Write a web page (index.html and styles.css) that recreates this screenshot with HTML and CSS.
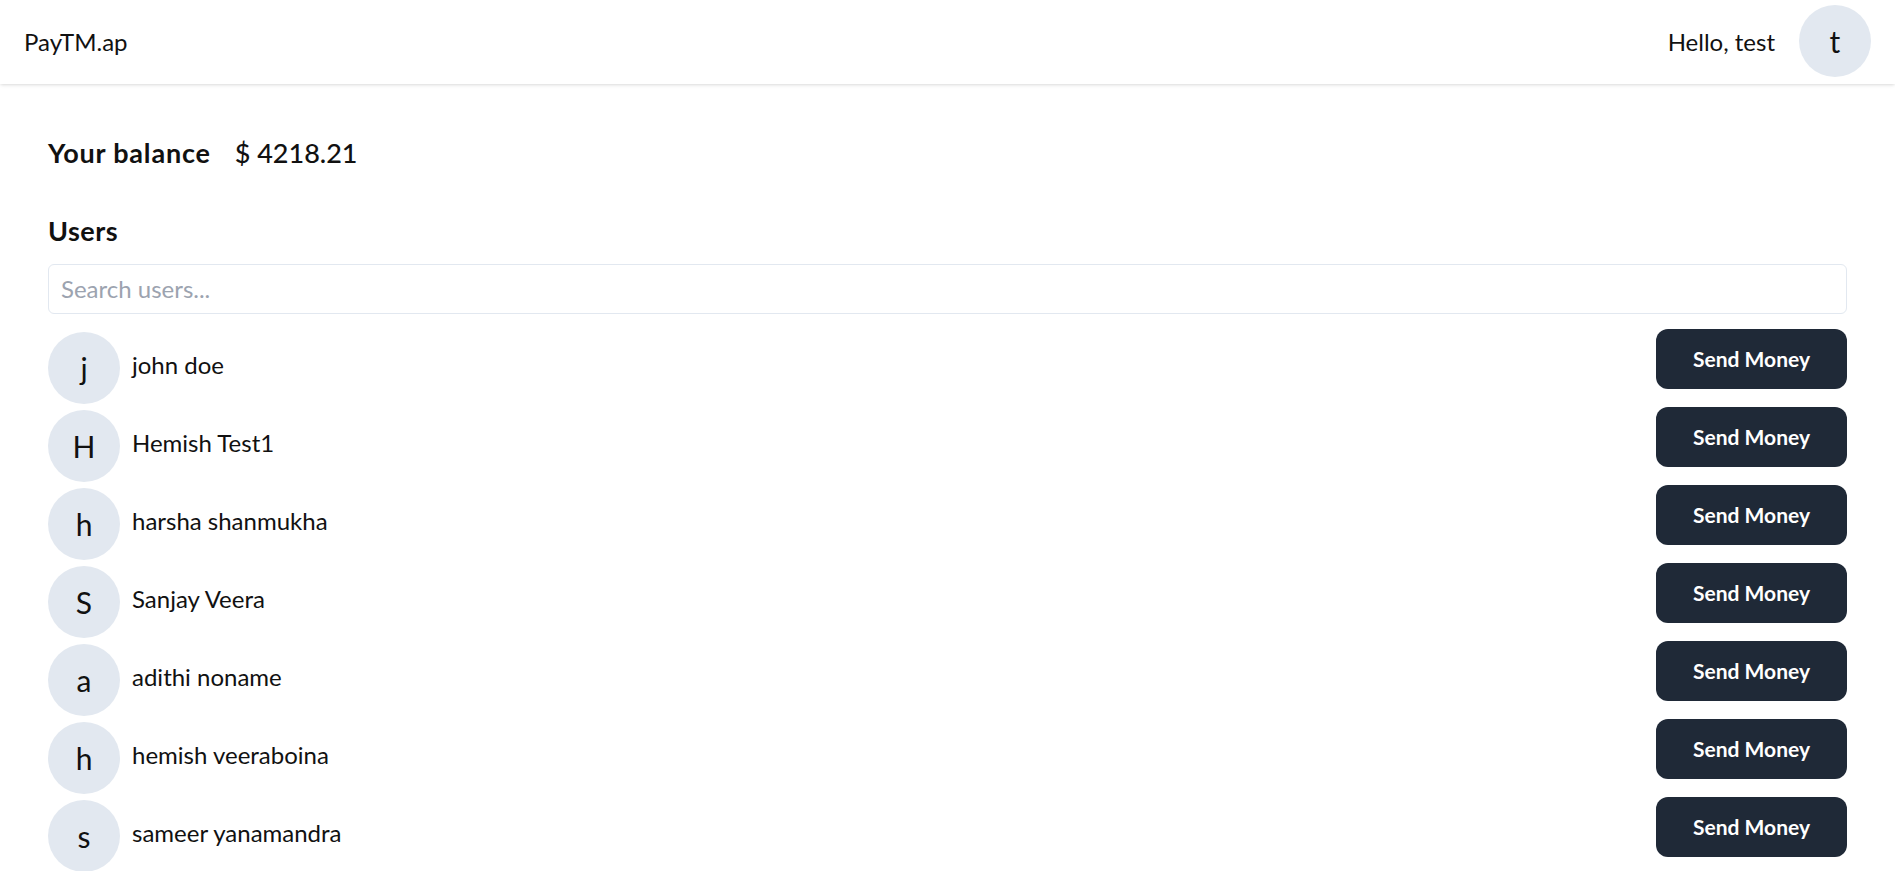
FILE: index.html
```html
<!DOCTYPE html>
<html lang="en">
<head>
  <meta charset="UTF-8" />
  <meta name="viewport" content="width=device-width,initial-scale=1.0" />
  <title>PayTM.ap</title>
  <link rel="stylesheet" href="styles.css">
</head>
<body>
  <header class="appbar">
    <div class="appbar-brand">PayTM.ap</div>
    <div class="appbar-user">
      <div class="appbar-hello">Hello, test</div>
      <div class="avatar avatar-header">t</div>
    </div>
  </header>

  <main class="dashboard">
    <div class="balance">
      <div class="balance-label">Your balance</div>
      <div class="balance-value">$ 4218.21</div>
    </div>

    <div class="users-title">Users</div>
    <div class="search">
      <input type="text" class="search-input" placeholder="Search users..." />
    </div>

    <div class="user-list">
      <div class="user-row">
        <div class="user-info">
          <div class="avatar">j</div>
          <div class="user-name">john doe</div>
        </div>
        <div class="user-action"><button class="btn">Send Money</button></div>
      </div>
      <div class="user-row">
        <div class="user-info">
          <div class="avatar">H</div>
          <div class="user-name">Hemish Test1</div>
        </div>
        <div class="user-action"><button class="btn">Send Money</button></div>
      </div>
      <div class="user-row">
        <div class="user-info">
          <div class="avatar">h</div>
          <div class="user-name">harsha shanmukha</div>
        </div>
        <div class="user-action"><button class="btn">Send Money</button></div>
      </div>
      <div class="user-row">
        <div class="user-info">
          <div class="avatar">S</div>
          <div class="user-name">Sanjay Veera</div>
        </div>
        <div class="user-action"><button class="btn">Send Money</button></div>
      </div>
      <div class="user-row">
        <div class="user-info">
          <div class="avatar">a</div>
          <div class="user-name">adithi noname</div>
        </div>
        <div class="user-action"><button class="btn">Send Money</button></div>
      </div>
      <div class="user-row">
        <div class="user-info">
          <div class="avatar">h</div>
          <div class="user-name">hemish veeraboina</div>
        </div>
        <div class="user-action"><button class="btn">Send Money</button></div>
      </div>
      <div class="user-row">
        <div class="user-info">
          <div class="avatar">s</div>
          <div class="user-name">sameer yanamandra</div>
        </div>
        <div class="user-action"><button class="btn">Send Money</button></div>
      </div>
    </div>
  </main>
</body>
</html>
```

FILE: styles.css
```css
:root {
  --color-text: #111111;
  --color-avatar: #e2e8f0;
  --color-border: #e2e8f0;
  --color-button: #1f2937;
  --color-placeholder: #9ca3af;
}

* {
  box-sizing: border-box;
}

body {
  margin: 0;
  font-family: "Segoe UI", Lato, "Open Sans", sans-serif;
  font-size: 24px;
  line-height: 36px;
  color: var(--color-text);
  background: #ffffff;
}

.appbar {
  height: 84px;
  display: flex;
  justify-content: space-between;
  box-shadow: 0 1px 4px 0 rgba(0, 0, 0, 0.1), 0 1px 3px -1px rgba(0, 0, 0, 0.1);
}

.appbar-brand {
  display: flex;
  flex-direction: column;
  justify-content: center;
  margin-left: 24px;
}

.appbar-user {
  display: flex;
}

.appbar-hello {
  display: flex;
  flex-direction: column;
  justify-content: center;
  margin-right: 24px;
}

.avatar {
  width: 72px;
  height: 72px;
  flex-shrink: 0;
  border-radius: 50%;
  background: var(--color-avatar);
  display: flex;
  align-items: center;
  justify-content: center;
  font-size: 30px;
  margin-top: 6px;
  margin-right: 12px;
}

.avatar-header {
  margin-top: 5px;
  margin-right: 24px;
}

.dashboard {
  margin: 48px;
}

.balance {
  display: flex;
  font-size: 27px;
  line-height: 42px;
}

.balance-label {
  font-weight: 700;
  letter-spacing: 0.8px;
}

.balance-value {
  font-weight: 500;
  margin-left: 24px;
}

.users-title {
  font-weight: 700;
  font-size: 27px;
  line-height: 42px;
  margin-top: 36px;
  letter-spacing: 0.5px;
}

.search {
  margin: 12px 0;
}

.search-input {
  width: 100%;
  font: inherit;
  padding: 6px 12px;
  border: 1px solid var(--color-border);
  border-radius: 6px;
  outline: none;
}

.search-input::placeholder {
  color: var(--color-placeholder);
}

.user-row {
  display: flex;
  justify-content: space-between;
}

.user-info {
  display: flex;
}

.user-name {
  display: flex;
  flex-direction: column;
  justify-content: center;
}

.user-action {
  display: flex;
  flex-direction: column;
  justify-content: center;
}

.btn {
  font-family: inherit;
  font-size: 21px;
  line-height: 30px;
  font-weight: 700;
  color: #ffffff;
  background: var(--color-button);
  border: none;
  border-radius: 12px;
  padding: 15px 37px;
  margin-bottom: 12px;
  cursor: pointer;
}
```
